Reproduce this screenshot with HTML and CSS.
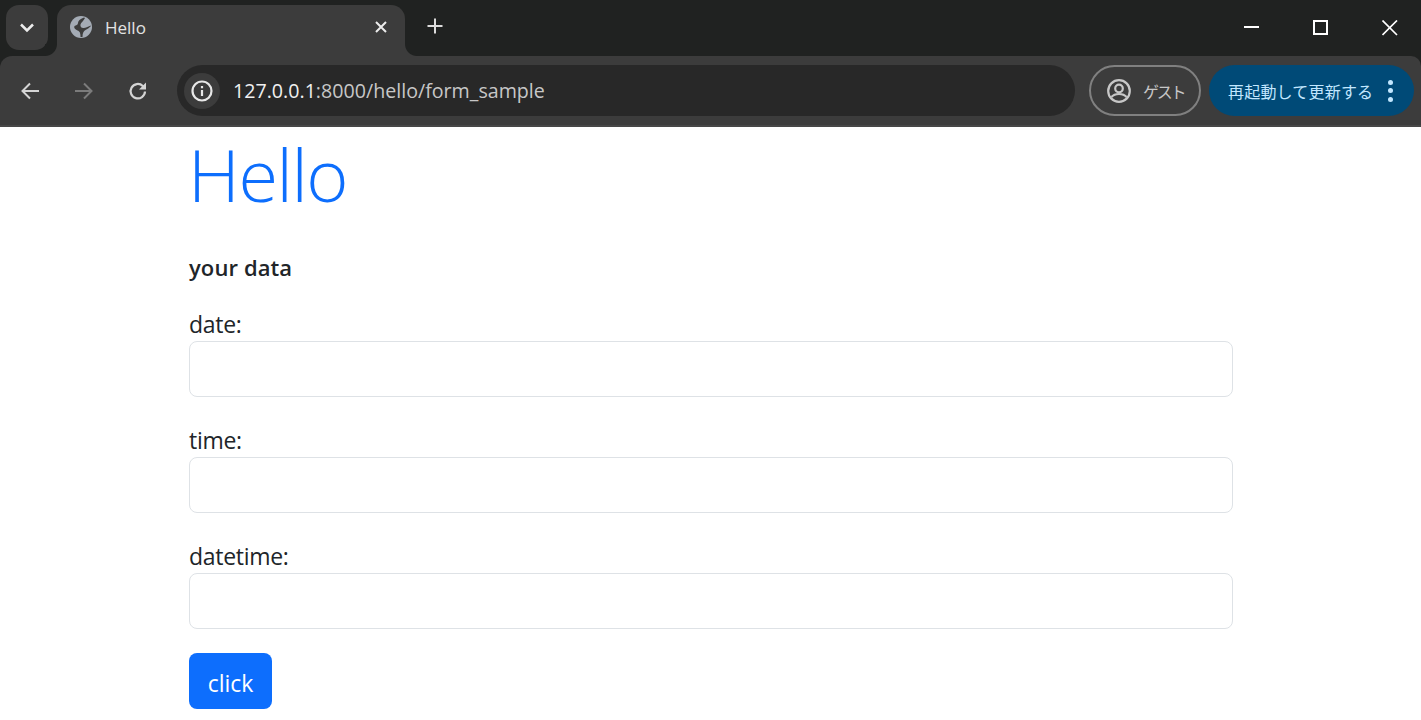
FILE: index.html
```html
<!DOCTYPE html>
<html lang="ja">
<head>
    <meta charset="UTF-8">
    <meta name="viewport" content="width=device-width, initial-scale=1.0">
    <title>Hello</title>
    <link rel="stylesheet" href="styles.css">
</head>
<body>
    <div class="browser">
        <div class="tabstrip">
            <div class="tab-search">
                <svg width="16" height="16" viewBox="0 0 16 16"><path d="M2 4.500l6 6 6-6" fill="none" stroke="#ececec" stroke-width="2.500"/></svg>
            </div>
            <div class="tab">
                <svg class="globe" width="22" height="22" viewBox="0 0 22 22">
                    <circle cx="11" cy="11" r="11" fill="#a4abb5"/>
                    <path d="M14 1.500C10 3 8 5 8 7 8 9 6 9 4.500 10 3.500 11.500 5 13.500 7.500 14.500 9.500 15.200 10.500 16.500 10.500 21L12.500 21C12.500 17 13.500 15 15.500 14 17.500 13 19.500 11.500 21.500 9.500 19 10 17 11.500 14 12 11.500 12.500 10 10.500 10.500 8.500 11 6.500 13.500 5 15 2Z" fill="#3c3c3c"/>
                </svg>
                <span class="tab-title">Hello</span>
                <svg class="tab-close" width="14" height="14" viewBox="0 0 14 14"><path d="M2 2l10 10M12 2L2 12" stroke="#ececec" stroke-width="2"/></svg>
            </div>
            <svg class="new-tab" width="18" height="18" viewBox="0 0 18 18"><path d="M9 1.500v15M1.500 9h15" stroke="#dcdcdc" stroke-width="2"/></svg>
            <div class="window-btns">
                <svg width="16" height="16" viewBox="0 0 16 16"><path d="M0 7h15" stroke="#fff" stroke-width="2"/></svg>
                <svg width="16" height="16" viewBox="0 0 16 16"><rect x="1" y="1" width="13" height="13" fill="none" stroke="#fff" stroke-width="2"/></svg>
                <svg width="16" height="16" viewBox="0 0 16 16"><path d="M.5 .5l14.500 14.500M15 .5L.5 15" stroke="#fff" stroke-width="1.700"/></svg>
            </div>
        </div>
        <div class="toolbar">
            <div class="nav-btns">
                <svg width="20" height="20" viewBox="0 0 20 20"><path d="M19 10H3M10 2.500L2.500 10l7.500 7.500" fill="none" stroke="#d4d4d4" stroke-width="2"/></svg>
                <svg width="20" height="20" viewBox="0 0 20 20"><path d="M1 10h16M10 2.500l7.500 7.500-7.500 7.500" fill="none" stroke="#7b7b7b" stroke-width="2"/></svg>
                <svg width="20" height="20" viewBox="0 0 20 20"><path d="M17 10.500a7.200 7.200 0 1 1-2.200-5.500L17 7.200" fill="none" stroke="#d4d4d4" stroke-width="2.200"/><path d="M18 1.500v7h-7z" fill="#d4d4d4"/></svg>
            </div>
            <div class="omnibox">
                <div class="site-info">
                    <svg width="22" height="22" viewBox="0 0 22 22"><circle cx="11" cy="11" r="9.500" fill="none" stroke="#e8e8e8" stroke-width="2.200"/><path d="M11 10v6M11 6v2.200" stroke="#e8e8e8" stroke-width="2.200"/></svg>
                </div>
                <span class="url"><span class="host">127.0.0.1</span>:8000/hello/form_sample</span>
            </div>
            <div class="guest">
                <svg width="26" height="26" viewBox="0 0 26 26"><circle cx="13" cy="13" r="10.800" fill="none" stroke="#c7c7c7" stroke-width="2.200"/><circle cx="13" cy="10.500" r="3.800" fill="none" stroke="#c7c7c7" stroke-width="2.200"/><path d="M5.500 19c2-2.500 4.500-3 7.500-3s5.500 .5 7.500 3" fill="none" stroke="#c7c7c7" stroke-width="2.200"/></svg>
                <span>ゲスト</span>
            </div>
            <div class="update">
                <span>再起動して更新する</span>
                <div class="dots"><i></i><i></i><i></i></div>
            </div>
        </div>
    </div>

    <div class="container">
        <h1 class="title">Hello</h1>
        <h2 class="subtitle">your data</h2>
        <form class="sample-form">
            <div class="field">
                <label>date:</label>
                <input type="text" class="form-input">
            </div>
            <div class="field">
                <label>time:</label>
                <input type="text" class="form-input">
            </div>
            <div class="field">
                <label>datetime:</label>
                <input type="text" class="form-input">
            </div>
            <button type="button" class="btn">click</button>
        </form>
    </div>
</body>
</html>
```

FILE: styles.css
```css
*{
    margin: 0;
    padding: 0;
    box-sizing: border-box;
}

html, body{
    height: 720px;
    overflow: hidden;
}

body{
    background: #fff;
    color: #212529;
    font-family: "Open Sans", "Noto Sans CJK JP", sans-serif;
}

/* browser chrome */
.browser{
    height: 127px;
    background: #202221;
}

.tabstrip{
    height: 56px;
    display: flex;
    align-items: flex-start;
    padding-left: 6px;
}

.tab-search{
    width: 42px;
    height: 45px;
    margin-top: 5px;
    background: #3c3c3c;
    border-radius: 13px;
    display: flex;
    align-items: center;
    justify-content: center;
}

.tab{
    position: relative;
    width: 348px;
    height: 51px;
    margin: 5px 0 0 9px;
    background: #3c3c3c;
    border-radius: 14px 14px 0 0;
    display: flex;
    align-items: center;
    padding: 0 17px 7px 13px;
}

.tab::before,
.tab::after{
    content: "";
    position: absolute;
    bottom: 0;
    width: 12px;
    height: 12px;
}

.tab::before{
    left: -12px;
    background: radial-gradient(circle at 0 0, #202221 11.500px, #3c3c3c 12.500px);
}

.tab::after{
    right: -12px;
    background: radial-gradient(circle at 100% 0, #202221 11.500px, #3c3c3c 12.500px);
}

.globe{
    flex: none;
}

.tab-title{
    flex: 1;
    margin-left: 13px;
    font-size: 17px;
    color: #e3e3e3;
}

.new-tab{
    margin: 17px 0 0 21px;
}

.window-btns{
    margin-left: auto;
    display: flex;
    gap: 53px;
    padding: 20px 23px 0 0;
}

.toolbar{
    position: relative;
    height: 71px;
    background: #3c3c3c;
    border-bottom: 2px solid #474747;
    border-radius: 12px 10px 0 0;
    display: flex;
    align-items: center;
    padding: 0 0 0 20px;
}

.nav-btns{
    display: flex;
    gap: 34px;
    width: 157px;
    flex: none;
}

.omnibox{
    width: 898px;
    height: 51px;
    background: #282828;
    border-radius: 26px;
    display: flex;
    align-items: center;
    padding-left: 7px;
}

.site-info{
    width: 36px;
    height: 36px;
    background: #3c3c3c;
    border-radius: 50%;
    display: flex;
    align-items: center;
    justify-content: center;
}

.url{
    margin-left: 13px;
    font-size: 19.650px;
    color: #c7c7c7;
}

.host{
    color: #f0f0f0;
}

.guest{
    width: 112px;
    height: 51px;
    margin-left: 14px;
    border: 2px solid #808080;
    border-radius: 26px;
    display: flex;
    align-items: center;
    padding-left: 15px;
    gap: 11px;
    font-size: 16px;
    letter-spacing: -2.300px;
    color: #c7c7c7;
}

.update{
    width: 205px;
    height: 51px;
    margin-left: 8px;
    background: #004a77;
    border-radius: 26px;
    display: flex;
    align-items: center;
    padding-left: 19px;
    font-size: 16px;
    letter-spacing: .2px;
    color: #c2e7ff;
}

.dots{
    margin-left: 15px;
    display: flex;
    flex-direction: column;
    gap: 3.500px;
}

.dots i{
    display: block;
    width: 5px;
    height: 5px;
    border-radius: 50%;
    background: #c2e7ff;
}

/* page */
.container{
    width: 1044px;
    margin-left: 189px;
}

.title{
    margin-left: -1px;
    font-size: 72px;
    font-weight: 300;
    line-height: 94px;
    color: #0d6efd;
    letter-spacing: -1.400px;
    margin-bottom: 33px;
}

.subtitle{
    font-size: 22px;
    font-weight: 600;
    line-height: 26px;
    letter-spacing: .1px;
    margin-bottom: 25px;
}

.field{
    margin-bottom: 24px;
}

.field label{
    display: block;
    padding: 3px 0 1px;
    font-size: 23px;
    line-height: 32px;
    letter-spacing: -.3px;
}

.form-input{
    display: block;
    width: 100%;
    height: 56px;
    border: 1px solid #dee2e6;
    border-radius: 8px;
    background: #fff;
}

.btn{
    display: block;
    width: 83px;
    height: 56px;
    padding-top: 3px;
    border: none;
    border-radius: 8px;
    background: #0d6efd;
    color: #fff;
    font-family: inherit;
    font-size: 23px;
}
```
